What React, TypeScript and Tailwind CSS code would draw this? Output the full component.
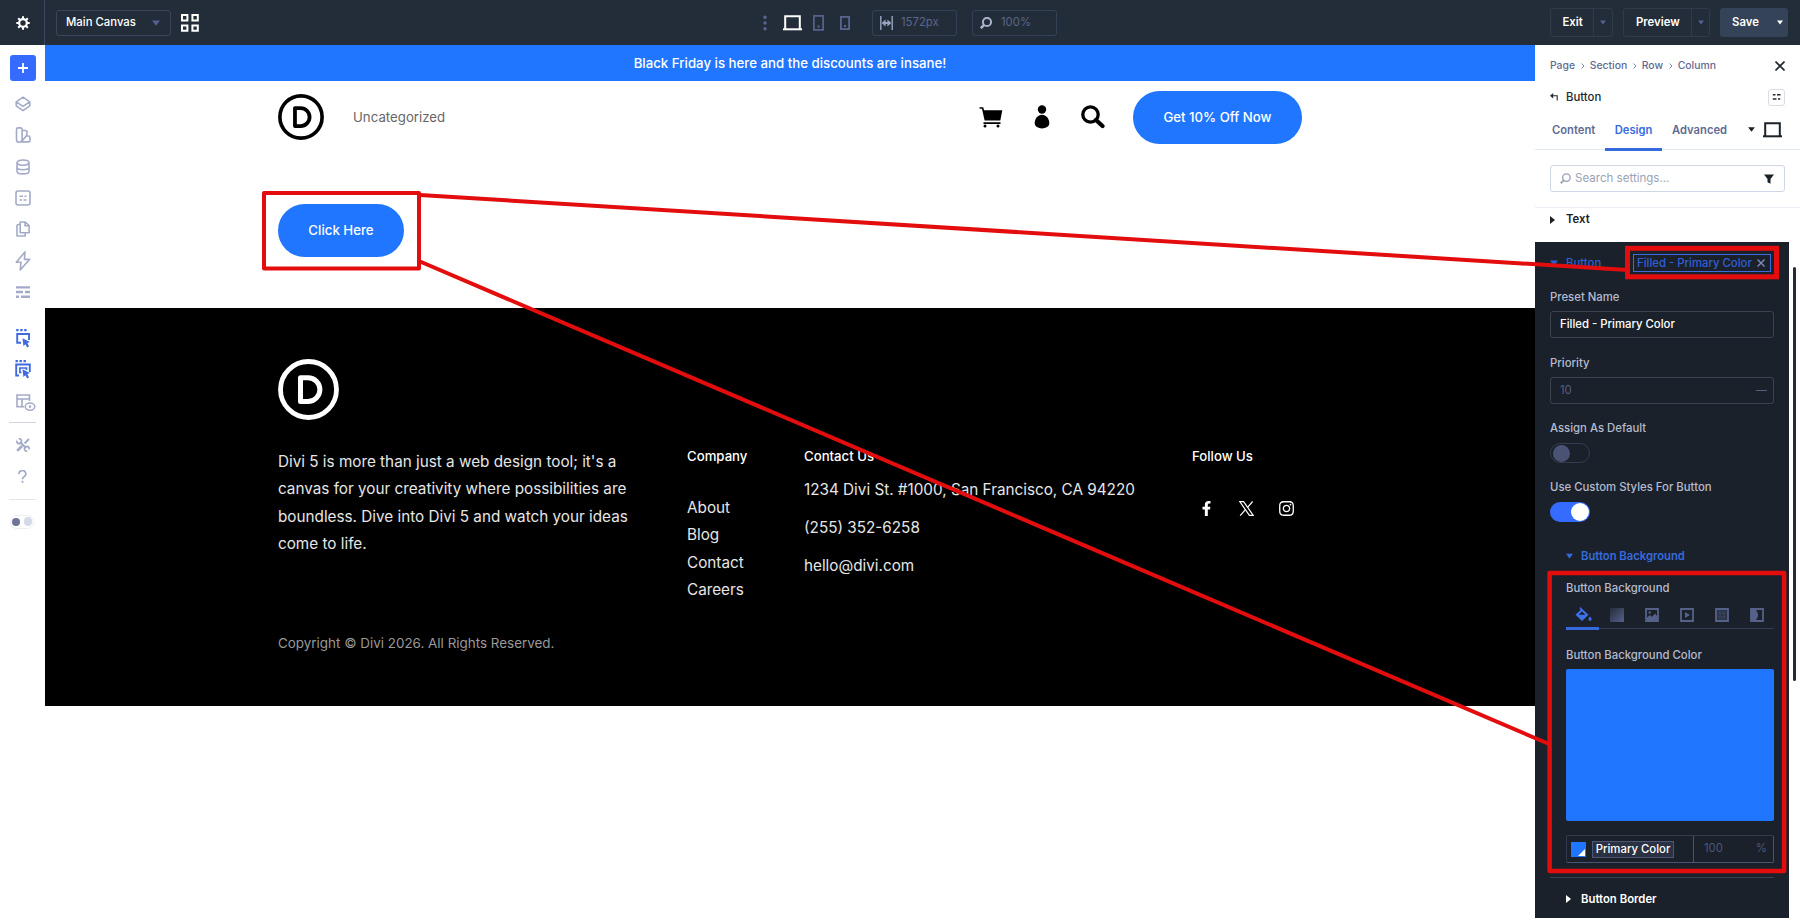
import React from "react";
import { FaFacebookF, FaInstagram } from "react-icons/fa";

type Kids = { children?: React.ReactNode; className?: string };

const T = ({ children, className = "" }: Kids) => (
  <span className={"whitespace-nowrap shrink-0 " + className}>{children}</span>
);

const Ico = ({ w, h, className = "", children }: { w: number; h: number } & Kids) => (
  <svg width={w} height={h} viewBox={`0 0 ${w} ${h}`} className={"shrink-0 block " + className} fill="none">
    {children}
  </svg>
);

const Down = ({ className = "" }: Kids) => (
  <Ico w={8} h={6} className={className}><path d="M0 .4h8L4 5.8z" fill="currentColor" /></Ico>
);
const Right = ({ className = "" }: Kids) => (
  <Ico w={5} h={8} className={className}><path d="M0 0v8l5-4z" fill="currentColor" /></Ico>
);
const Laptop = ({ className = "" }: Kids) => (
  <Ico w={19} h={16} className={className}>
    <path d="M2.2 14V1.2h14.6V14" stroke="currentColor" strokeWidth="2" />
    <path d="M0 14.3h19" stroke="currentColor" strokeWidth="2" />
  </Ico>
);
const Lens = ({ className = "", sw = 1.6 }: Kids & { sw?: number }) => (
  <Ico w={12} h={12} className={className}>
    <circle cx="7" cy="5" r="4.1" stroke="currentColor" strokeWidth={sw} />
    <path d="M4 8L.8 11.2" stroke="currentColor" strokeWidth={sw + 0.5} />
  </Ico>
);
const Logo = ({ size }: { size: number }) => (
  <svg width={size} height={size} viewBox="0 0 61 61" fill="none" stroke="currentColor" strokeWidth="4.8" className="block shrink-0">
    <circle cx="30.5" cy="30.5" r="28" />
    <path d="M22.5 18.7h7.5a11.8 11.8 0 0 1 0 23.8h-7.5z" strokeLinejoin="round" strokeWidth="5" />
  </svg>
);

const TopBar = () => (
  <header className="flex h-[45px] shrink-0 items-center bg-[#232d39] text-[11.35px] text-white">
    <div className="flex h-full w-[45px] items-center justify-center border-r border-[#3b4763] pl-px">
      <Ico w={14} h={14}>
        <circle cx="7" cy="7" r="3.8" stroke="currentColor" strokeWidth="2.2" />
        <path d="M7 .3v2.700M7 11v2.700M.3 7H3M11 7h2.700M2.200 2.200l2 2M9.800 9.800l2 2M11.800 2.200l-2 2M4.200 9.800l-2 2" stroke="currentColor" strokeWidth="2" />
      </Ico>
    </div>
    <div className="ml-[11px] flex h-[26px] w-[115px] items-center rounded-[3px] border border-[#3a445a] pl-[9px]">
      <T className="pt-px font-medium">Main Canvas</T>
      <Down className="ml-auto mr-[10px] text-[#575f94]" />
    </div>
    <Ico w={18} h={18} className="ml-[10px]">
      <path d="M1 1h5.4v5.4H1zM11.4 1h5.4v5.4h-5.4zM1 11.4h5.4v5.4H1zM11.4 11.4h5.4v5.4h-5.4z" stroke="currentColor" strokeWidth="2" />
    </Ico>
    <Ico w={4} h={16} className="ml-[564px] text-[#59648f]">
      <circle cx="2" cy="2.2" r="1.7" fill="currentColor" /><circle cx="2" cy="8" r="1.7" fill="currentColor" /><circle cx="2" cy="13.8" r="1.7" fill="currentColor" />
    </Ico>
    <Laptop className="ml-[16px]" />
    <Ico w={11} h={16} className="ml-[11px] text-[#59648f]">
      <rect x=".9" y=".9" width="9.2" height="14" stroke="currentColor" strokeWidth="1.7" /><path d="M4.500 10.500h2v2h-2z" fill="currentColor" />
    </Ico>
    <Ico w={10} h={14} className="ml-[16px] text-[#59648f]">
      <rect x=".9" y=".9" width="8.2" height="12.2" stroke="currentColor" strokeWidth="1.8" /><path d="M4 9h2v2H4z" fill="currentColor" />
    </Ico>
    <div className="ml-[22px] flex h-[26px] w-[85px] items-center rounded-[3px] border border-[#344055] pl-[7px] text-[#5a648c]">
      <Ico w={13} h={14} className="text-[#9aa3c0]">
        <path d="M.8 0v14M12.2 0v14" stroke="currentColor" strokeWidth="1.4" />
        <path d="M4 7h5" stroke="currentColor" strokeWidth="2" /><path d="M1.6 7L5.6 3.4v7.2zM11.4 7L7.4 3.4v7.2z" fill="currentColor" />
      </Ico>
      <T className="ml-[8px] pt-px">1572px</T>
    </div>
    <div className="ml-[15px] flex h-[26px] w-[85px] items-center rounded-[3px] border border-[#344055] pl-[7px] text-[#5a648c]">
      <Lens className="text-[#a9b1cc]" sw={2} />
      <T className="ml-[9px] pt-px">100%</T>
    </div>
    <div className="ml-[493px] flex h-[29px] w-[63px] items-center rounded-[3px] border border-[#2f3a4a]">
      <div className="flex h-full w-[43px] items-center border-r border-[#2f3a4a] pl-[11.500px]"><T className="pt-px font-semibold">Exit</T></div>
      <Down className="ml-[6px] h-[5px] w-[6px] text-[#575f94]" />
    </div>
    <div className="ml-[10px] flex h-[29px] w-[87px] items-center rounded-[3px] border border-[#2f3a4a]">
      <div className="flex h-full w-[68px] items-center border-r border-[#2f3a4a] pl-[12px]"><T className="pt-px font-semibold">Preview</T></div>
      <Down className="ml-[6px] h-[5px] w-[6px] text-[#575f94]" />
    </div>
    <div className="ml-[10px] flex h-[29px] w-[68px] items-center rounded-[3px] bg-[#344358] pl-[12px]">
      <T className="pt-px font-semibold">Save</T>
      <Down className="ml-auto mr-[5px] h-[5px] w-[6px]" />
    </div>
  </header>
);

const Slot = ({ children, className = "" }: Kids) => (
  <div className={"flex h-[31.3px] shrink-0 items-center justify-center " + className}>{children}</div>
);

const Pointer = () => <path d="M7.500 9.200l7.500 3.900-2.600 1 1.600 3.500-1.800.9-1.800-3.300-2 1.900z" fill="currentColor" />;

const Rail = () => (
  <nav className="flex w-[45px] shrink-0 flex-col bg-white text-[#a3abc8]">
    <div className="ml-[9.500px] mt-[10px] flex h-[26px] w-[26.500px] items-center justify-center rounded-[3px] bg-[#366bff] text-white">
      <Ico w={10} h={10}><path d="M5 0v10M0 5h10" stroke="currentColor" strokeWidth="1.8" /></Ico>
    </div>
    <Slot className="mt-[7.5px]">
      <Ico w={16} h={16}><path d="M8 1.2L14.8 5.8 8 10.4 1.2 5.8zM1.2 5.8v4L8 14.6l6.8-4.8v-4" stroke="currentColor" strokeWidth="1.6" strokeLinejoin="round" /></Ico>
    </Slot>
    <Slot>
      <Ico w={16} h={16}><path d="M3 .9h2.6a1.5 1.5 0 0 1 1.5 1.5v10a2.8 2.8 0 0 1-5.6 0v-10A1.5 1.5 0 0 1 3 .9zM7.1 3.5h3.6a1.4 1.4 0 0 1 1.3 1.6l-.4 3.5-5 5.9M12 9h1.4a1.6 1.6 0 0 1 1.6 1.6v2.6a1.7 1.7 0 0 1-1.7 1.7H5" stroke="currentColor" strokeWidth="1.6" /></Ico>
    </Slot>
    <Slot>
      <Ico w={14} h={16}><path d="M1 3.6C1 2.2 3.7 1 7 1s6 1.200 6 2.600S10.300 6.200 7 6.200 1 5 1 3.600zM1 3.600v8.600C1 13.700 3.700 14.900 7 14.900s6-1.200 6-2.700V3.600M1 8.200c0 1.400 2.700 2.500 6 2.500s6-1.100 6-2.500" stroke="currentColor" strokeWidth="1.6" /></Ico>
    </Slot>
    <Slot>
      <Ico w={16} h={16}><rect x="1" y="1" width="14" height="14" rx="2" stroke="currentColor" strokeWidth="1.6" /><path d="M4.500 6.200h3.500M9.500 6.200h2M4.500 10h2.500M8.500 10h3" stroke="currentColor" strokeWidth="1.500" /></Ico>
    </Slot>
    <Slot>
      <Ico w={14} h={16}><path d="M4.200 1h5l3.900 3.500v7.200H4.200zM9 1v3.700h4M4 3.500H2.300A1.300 1.300 0 0 0 1 4.800v10.200h8.200v-3" stroke="currentColor" strokeWidth="1.600" strokeLinejoin="round" /></Ico>
    </Slot>
    <Slot>
      <Ico w={16} h={20}><path d="M10 .9L1.300 11.200H6L5.200 19 14.600 8.400H9.400z" stroke="currentColor" strokeWidth="1.600" strokeLinejoin="round" /></Ico>
    </Slot>
    <Slot>
      <Ico w={14} h={12}><path d="M0 1.400h14M0 6h7M9 6h5M0 10.700h3M5 10.700h9" stroke="currentColor" strokeWidth="2.400" /></Ico>
    </Slot>
    <Slot className="mt-[15px] text-[#3f6bdf]">
      <Ico w={16} h={19}>
        <path d="M1.200 1.200h2.400M5.200 1.200h2.400M9.200 1.200h2.400" stroke="currentColor" strokeWidth="2.200" />
        <path d="M6 13.800H2.200V5h11.800v6" stroke="currentColor" strokeWidth="1.900" /><Pointer />
      </Ico>
    </Slot>
    <Slot className="text-[#3f6bdf]">
      <Ico w={16} h={19}>
        <path d="M.5 1.200h2.400M4.500 1.200h2.400M8.500 1.200h2.400" stroke="currentColor" strokeWidth="2.200" />
        <path d="M4 15.500H1.200V4.500h13.600V12" stroke="currentColor" strokeWidth="1.900" /><path d="M6.500 12.500H4.900V8h6.600v2" stroke="currentColor" strokeWidth="1.700" /><Pointer />
      </Ico>
    </Slot>
    <Slot className="mt-[1.500px] pl-[6px]">
      <Ico w={20} h={17}>
        <path d="M8 12.800H1V1h12.500v6M1 5h12.500M6 5v8" stroke="currentColor" strokeWidth="1.600" />
        <ellipse cx="14" cy="12.600" rx="4.800" ry="3.600" fill="#fff" stroke="currentColor" strokeWidth="1.500" /><circle cx="14" cy="12.600" r="1.300" fill="currentColor" />
      </Ico>
    </Slot>
    <div className="mx-[9px] mt-[4.500px] h-px shrink-0 bg-[#d2d4dc]" />
    <div className="mt-[6.500px] flex h-[31px] shrink-0 items-center justify-center">
      <Ico w={14} h={14}>
        <path d="M.8 2.700A2.400 2.400 0 1 0 2.700.8M13.200 11.300A2.400 2.400 0 1 0 11.300 13.200" stroke="currentColor" strokeWidth="1.700" />
        <path d="M4 4l6 6" stroke="currentColor" strokeWidth="2" />
        <path d="M13 1L8.500 5.500" stroke="currentColor" strokeWidth="2" /><path d="M6 8l-4.800 4.800" stroke="currentColor" strokeWidth="2.600" />
      </Ico>
    </div>
    <div className="flex h-[31px] shrink-0 items-center justify-center">
      <Ico w={9} h={13}><path d="M1 4.200A3.400 3.300 0 1 1 6 6.700C4.800 7.400 4.500 8 4.500 9.300" stroke="currentColor" strokeWidth="1.700" /><circle cx="4.500" cy="11.800" r="1.100" fill="currentColor" /></Ico>
    </div>
    <div className="mx-[9px] mt-[7px] h-px shrink-0 bg-[#e3e5ec]" />
    <div className="ml-[10px] mt-[15px] flex h-[14px] w-[24px] shrink-0 items-center gap-[4px] rounded-full border border-[#eceef4] px-px">
      <div className="h-[8px] w-[8px] rounded-full bg-[#6f7499]" />
      <div className="h-[9px] w-[9px] rounded-full bg-[#d3dae8]" />
    </div>
  </nav>
);

const Site = () => (
  <main className="flex w-[1490px] shrink-0 flex-col bg-white">
    <div className="flex h-[36px] items-center justify-center bg-[#2176ff] text-white">
      <T className="pt-px text-[13.26px] font-medium">Black Friday is here and the discounts are insane!</T>
    </div>
    <div className="flex h-[72px] items-center px-[233px]">
      <Logo size={46} />
      <T className="ml-[29px] pt-px text-[13.250px] text-[#666]">Uncategorized</T>
      <div className="ml-auto flex items-center text-black">
        <Ico w={24} h={21}>
          <path d="M.3.200h3.900l.9 3H23.300L21.300 13.500H5.600L3 1.800H.8zM4.500 15.300h17v1.800h-17z" fill="currentColor" /><circle cx="6" cy="19" r="1.500" fill="currentColor" /><circle cx="19" cy="19" r="1.500" fill="currentColor" />
        </Ico>
        <Ico w={16} h={24} className="ml-[31px]">
          <circle cx="8" cy="4.500" r="4.200" fill="currentColor" /><path d="M8 9.800c4 0 7.300 4.200 7.300 8.300 0 3.700-3.500 5.300-7.300 5.300S.7 21.800.7 18.100C.7 14 4 9.800 8 9.800z" fill="currentColor" />
        </Ico>
        <Ico w={24} h={24} className="ml-[31px]">
          <circle cx="9.500" cy="9.500" r="7.700" stroke="currentColor" strokeWidth="3.300" /><path d="M15 15l6.500 6" stroke="currentColor" strokeWidth="4.200" strokeLinecap="round" />
        </Ico>
        <div className="ml-[28px] flex h-[53px] w-[169px] items-center justify-center rounded-full bg-[#2176ff] text-white">
          <T className="pt-px text-[13.200px] font-medium">Get 10% Off Now</T>
        </div>
      </div>
    </div>
    <div className="flex h-[155px] px-[233px] pt-[51px]">
      <div className="flex h-[53px] w-[126px] items-center justify-center rounded-full bg-[#2176ff] text-white">
        <T className="text-[13.250px] font-medium">Click Here</T>
      </div>
    </div>
    <footer className="flex h-[398px] flex-col bg-black px-[233px] pt-[51px] text-white">
      <Logo size={61} />
      <div className="mt-[23px] flex h-[181px]">
        <div className="flex w-[409px] flex-col pt-[5px] text-[15.270px] leading-[27.4px] text-[#e6e6e6]">
          <T>Divi 5 is more than just a web design tool; it's a</T>
          <T>canvas for your creativity where possibilities are</T>
          <T>boundless. Dive into Divi 5 and watch your ideas</T>
          <T>come to life.</T>
        </div>
        <div className="flex w-[117px] flex-col items-start text-[15.270px] leading-[27.2px] text-[#e6e6e6]">
          <T className="mb-[24px] text-[13.200px] font-medium text-white">Company</T>
          <T>About</T>
          <T>Blog</T>
          <T>Contact</T>
          <T>Careers</T>
        </div>
        <div className="flex w-[388px] flex-col items-start text-[15.270px] leading-[27.400px] text-[#e6e6e6]">
          <T className="mb-[6px] text-[13.200px] font-medium text-white">Contact Us</T>
          <T className="mb-[10.300px]">1234 Divi St. #1000, San Francisco, CA 94220</T>
          <T className="mb-[10.300px]">(255) 352-6258</T>
          <T>hello@divi.com</T>
        </div>
        <div className="flex flex-col items-start leading-[27.400px]">
          <T className="text-[13.200px] font-medium">Follow Us</T>
          <div className="mt-[30px] flex items-center pl-[7px] text-white">
            <FaFacebookF size={15} />
            <Ico w={15} h={15} className="ml-[25px]">
              <path d="M.8.700h3.800l9.600 13.600h-3.800z" stroke="currentColor" strokeWidth="1.200" />
              <path d="M13.600.500L8.600 6.300M6.400 8.600L1.200 14.600" stroke="currentColor" strokeWidth="1.200" />
            </Ico>
            <FaInstagram size={17} className="ml-[24px]" />
          </div>
        </div>
      </div>
      <T className="mt-[9px] text-[13.430px] leading-[20px] text-[#999]">Copyright © Divi 2026. All Rights Reserved.</T>
    </footer>
  </main>
);

const Chev = () => (
  <div className="w-[14.600px] pl-[6px]">
    <Ico w={4} h={6}><path d="M.5.500L3 3 .5 5.500" stroke="#7c86ad" strokeWidth="1" /></Ico>
  </div>
);

const Label = ({ children, className = "" }: Kids) => (
  <div className={"flex h-[16px] items-center font-medium text-[#b5bbd0] " + className}><T>{children}</T></div>
);

const Panel = () => (
  <aside className="flex w-[265px] shrink-0 flex-col bg-white text-[11.350px]">
    <div className="flex h-[40px] items-center px-[15px] pt-px text-[10.400px] font-medium text-[#5f6b93]">
      <T>Page</T>
      <Chev />
      <T>Section</T>
      <Chev />
      <T>Row</T>
      <Chev />
      <T>Column</T>
      <Ico w={10} h={10} className="ml-auto text-[#20292f]"><path d="M.5.500l9 9M9.500.500l-9 9" stroke="currentColor" strokeWidth="1.600" /></Ico>
    </div>
    <div className="flex h-[24px] items-center px-[15px] text-[#20292f]">
      <Ico w={8} h={8}><path d="M3.200 0v5.600L0 2.800z" fill="currentColor" /><path d="M2.500 2.800h4.700v4.700" stroke="currentColor" strokeWidth="1.100" /></Ico>
      <T className="ml-[8px] pt-px font-medium">Button</T>
      <div className="ml-auto flex h-[17px] w-[17px] items-center justify-center rounded-[3px] border border-[#dadde6]">
        <Ico w={9} h={8}><path d="M.8 1.700h2.700M5 1.700h3.500M.8 6h3.700M6 6h2.200" stroke="currentColor" strokeWidth="1.500" /></Ico>
      </div>
    </div>
    <div className="flex h-[41px] border-b border-[#e3e7ef] pl-[17px] pr-[18px] text-[11.230px] font-semibold text-[#5f6b93]">
      <div className="flex h-[41px] w-[43px] items-center pt-[2px]"><T>Content</T></div>
      <div className="ml-[10px] flex h-[42px] w-[57px] shrink-0 items-center justify-center border-b-[3px] border-[#366bdf] pt-[4px] text-[#366bdf]"><T>Design</T></div>
      <div className="ml-[10px] flex h-[41px] items-center pt-[2px]"><T>Advanced</T></div>
      <div className="ml-auto flex h-[41px] items-center text-[#1b2227]">
        <Down className="mr-[8px] h-[5px] w-[7px]" /><Laptop />
      </div>
    </div>
    <div className="mx-[15px] mt-[15px] flex h-[27px] w-[235px] shrink-0 items-center rounded-[3px] border border-[#cfd7e6] pl-[9px] pr-[10px] text-[#9aa3b5]">
      <Lens sw={1.500} className="h-[11px] w-[11px]" />
      <T className="ml-[4px] text-[11.550px]">Search settings...</T>
      <Ico w={10} h={10} className="ml-auto text-[#1b2227]"><path d="M0 .500h10L6.500 5v4.800l-3-1.500V5z" fill="currentColor" /></Ico>
    </div>
    <div className="mt-[15px] flex h-[35px] items-start border-t border-[#eceff4] pl-[15px] pt-[3px] text-[#1b2227]">
      <div className="flex h-[17px] items-center"><Right /><T className="ml-[11px] font-semibold">Text</T></div>
    </div>
    <div className="flex flex-1">
      <div className="flex h-[676px] w-[254px] shrink-0 flex-col bg-[#1b212a] pl-[15px]">
        <div className="mt-[12px] flex h-[18px] w-[221px] items-center text-[#2f5fd6]">
          <Down /><T className="ml-[8px] pt-px font-medium">Button</T>
          <div className="ml-auto flex h-[18px] w-[138px] items-center border border-[#3c6be0] pl-[3px]">
            <T className="font-medium">Filled - Primary Color</T>
            <Ico w={8} h={8} className="ml-[5px] text-[#7d8cb8]"><path d="M.5.500l7 7M7.500.500l-7 7" stroke="currentColor" strokeWidth="1.400" /></Ico>
          </div>
        </div>
        <Label className="mt-[17px]">Preset Name</Label>
        <div className="mt-[6px] flex h-[27px] w-[224px] items-center rounded-[3px] border border-[#3c4350] pl-[9px] font-medium text-white"><T className="pt-px">Filled - Primary Color</T></div>
        <Label className="mt-[17px]">Priority</Label>
        <div className="mt-[6px] flex h-[27px] w-[224px] items-center justify-between rounded-[3px] border border-[#3c4350] pl-[9px] pr-[6px] text-[#545e80]"><T>10</T><div className="h-px w-[11px] bg-[#545e80]" /></div>
        <Label className="mt-[16px]">Assign As Default</Label>
        <div className="mt-[7px] flex h-[20px] w-[40px] items-center rounded-full border border-[#343c4f] pl-[2px]"><div className="h-[17px] w-[17px] rounded-full bg-[#4a5373]" /></div>
        <Label className="mt-[16px]">Use Custom Styles For Button</Label>
        <div className="mt-[7px] flex h-[20px] w-[40px] items-center justify-end rounded-full bg-[#366bff] pr-[1px]"><div className="h-[18px] w-[18px] rounded-full bg-white" /></div>
        <div className="mt-[26px] flex h-[16px] items-center pl-[15.500px] text-[#366bdf]"><Down className="h-[6px] w-[7px]" /><T className="ml-[8.500px] text-[11.260px] font-semibold">Button Background</T></div>
        <div className="flex w-[224px] flex-col pl-[16px]">
          <Label className="mt-[16px]">Button Background</Label>
          <div className="mt-[7px] flex h-[26px] items-start border-b border-[#353d50] text-[#56618a]">
            <div className="flex h-[27px] w-[33px] justify-center border-b-[3px] border-[#366bdf] pl-[2px] pt-[4px] text-[#3f70e8]">
              <Ico w={17} h={15}><path d="M5.500 0l1.200 1.500 6.800 6.200-6.500 6.300L.5 7.700 5.600 3 4.500 1.200zM7 4.500L3.600 7.700h6.800z" fill="currentColor" fillRule="evenodd" /><path d="M15 9.500c1 1.200 1.500 2 1.500 2.800a1.500 1.500 0 0 1-3 0c0-.8.5-1.600 1.500-2.800z" fill="currentColor" /></Ico>
            </div>
            <div className="ml-[11px] mt-[5px] flex gap-[21px]">
              <div className="h-[14px] w-[14px] bg-linear-to-br from-[#262d3c] to-[#56618a]" />
              <Ico w={14} h={14}><path d="M1 1h12v12H1z" stroke="currentColor" strokeWidth="1.800" /><path d="M2 12V9.500l3-2.500 2 2 3-3.500 2.500 3V12z" fill="currentColor" /><circle cx="4.700" cy="4.500" r="1.200" fill="currentColor" /></Ico>
              <Ico w={14} h={14}><path d="M1 1h12v12H1z" stroke="currentColor" strokeWidth="1.800" /><path d="M5 4l5 3-5 3z" fill="currentColor" /></Ico>
              <Ico w={14} h={14}><path d="M1 1h12v12H1z" fill="#2c3445" stroke="currentColor" strokeWidth="1.800" /><path d="M3 5h8M3 9h8M5 3v8M9 3v8" stroke="#3a4462" strokeWidth="1" /></Ico>
              <Ico w={14} h={14}><path d="M1 1h12v12H1z" stroke="currentColor" strokeWidth="1.800" /><path d="M1 1h4c2 2 3 4 3 6s-1 4-3 6H1z" fill="currentColor" /></Ico>
            </div>
          </div>
          <Label className="mt-[18px]">Button Background Color</Label>
          <div className="mt-[6px] h-[152px] rounded-[2px] bg-[#2176ff]" />
          <div className="mt-[14px] flex h-[28px] items-center rounded-[2px] border border-[#333a4c] border-b-[#4b5373] border-r-[#4b5373] pl-[4px]">
            <Ico w={15} h={15}><path d="M0 0h15v15H0z" fill="#2176ff" /><path d="M14 7v7H7z" fill="#fff" /></Ico>
            <div className="ml-[6px] flex h-[17px] w-[82px] items-center justify-center border border-[#4c5675] bg-[#2a3142]"><T className="font-medium text-white">Primary Color</T></div>
            <div className="ml-auto flex h-full w-[80px] items-center justify-between border-l border-[#4b5373] pl-[10px] pr-[6px] text-[#4b557a]"><T>100</T><T>%</T></div>
          </div>
        </div>
        <div className="mt-[14px] h-px w-[224px] bg-[#3a4050]" />
        <div className="mt-[13px] flex h-[16px] items-center pl-[16px] text-white"><Right /><T className="ml-[10px] font-semibold">Button Border</T></div>
      </div>
      <div className="ml-[4px] mt-[25px] h-[414px] w-[3px] rounded-full bg-[#252c38]" />
    </div>
  </aside>
);

const Marks = () => (
  <svg width="1800" height="920" viewBox="0 0 1800 920" className="pointer-events-none absolute left-0 top-0" fill="none" stroke="#e30d0e">
    <rect x="264" y="193" width="155" height="75.500" strokeWidth="4" strokeLinejoin="round" />
    <path d="M420 195L1628 270M420 261.500L1549 744" strokeWidth="4" />
    <rect x="1627.500" y="248.300" width="149" height="28.500" strokeWidth="5" />
    <rect x="1549.600" y="573" width="234.500" height="298" strokeWidth="4.500" strokeLinejoin="round" />
  </svg>
);

export default function App() {
  return (
    <div className="relative flex h-[920px] w-[1800px] flex-col overflow-hidden bg-white font-['Inter',sans-serif] antialiased">
      <TopBar />
      <div className="flex min-h-0 flex-1"><Rail /><Site /><Panel /></div>
      <Marks />
    </div>
  );
}
